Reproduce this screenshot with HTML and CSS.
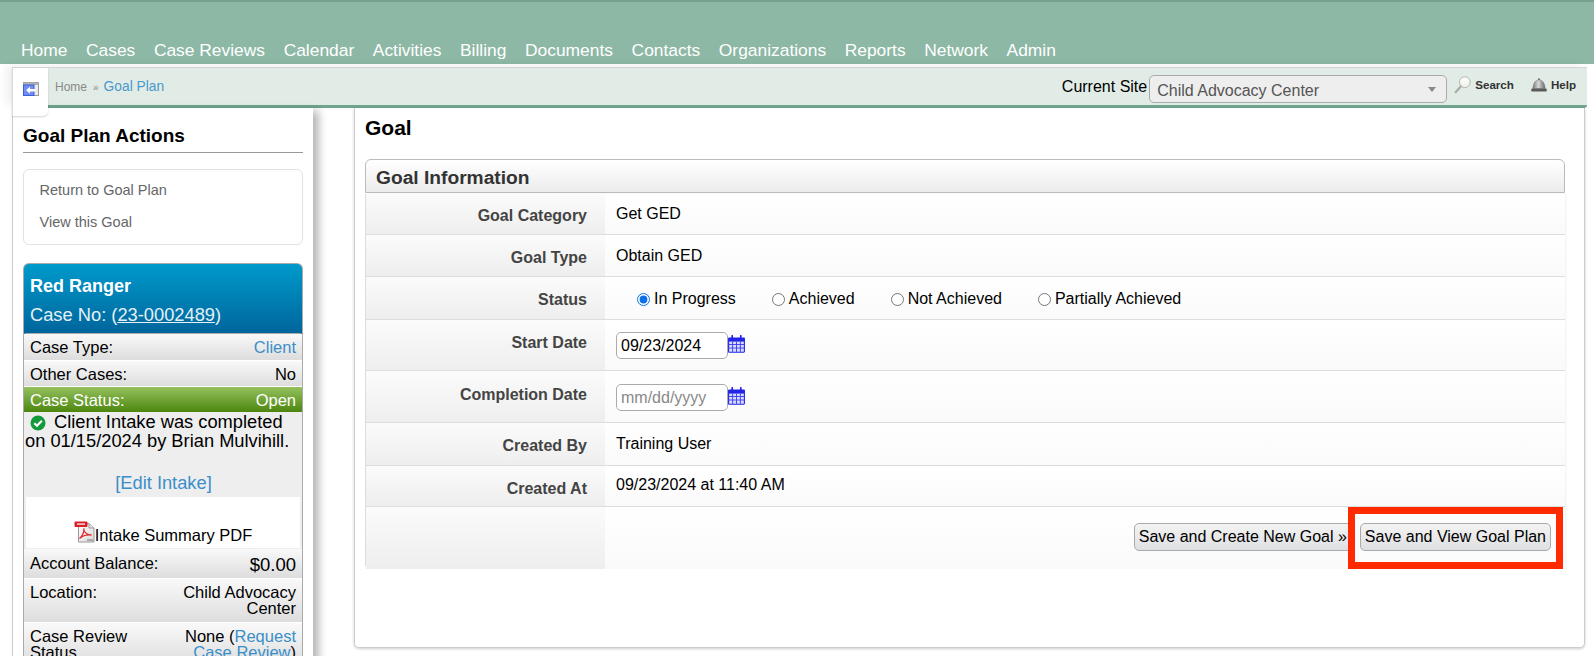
FILE: index.html
```html
<!DOCTYPE html>
<html lang="en">
<head>
<meta charset="utf-8">
<title>Goal</title>
<link rel="stylesheet" href="styles.css">
</head>
<body>
<nav class="topnav">
  <a>Home</a><a>Cases</a><a>Case Reviews</a><a>Calendar</a><a>Activities</a><a>Billing</a><a>Documents</a><a>Contacts</a><a>Organizations</a><a>Reports</a><a>Network</a><a>Admin</a>
</nav>
<div class="subbar">
  <div class="tab">
    <svg class="tab-icon" width="16" height="14" viewBox="0 0 16 14"><rect x="0.5" y="0.5" width="15" height="13" fill="#ececec" stroke="#9a9a9a"/><rect x="0.5" y="0.5" width="15" height="2.5" fill="#b0b0b0"/><rect x="0.5" y="3" width="10.5" height="10.5" fill="#6f8ef0" stroke="#3a5ce0"/><path d="M3 8.2 L7 4.8 V7 H12 V9.4 H7 V11.6 Z" fill="#fff"/></svg>
  </div>
  <div class="crumbs"><a class="crumb-home">Home</a><span class="crumb-sep">»</span><a class="crumb-link">Goal Plan</a></div>
  <div class="tools">
    <span class="site-label">Current Site</span>
    <div class="select-wrap"><select class="site-select"><option>Child Advocacy Center</option></select></div>
    <a class="tool tool-search">
      <svg width="17" height="18" viewBox="0 0 17 18"><defs><linearGradient id="lens" x1="0" y1="0" x2="0" y2="1"><stop offset="0" stop-color="#ffffff"/><stop offset="1" stop-color="#eef0e8"/></linearGradient></defs><circle cx="10.8" cy="6.2" r="5.4" fill="url(#lens)" stroke="#b3b7ae"/><path d="M6.8 10.4 L1.6 16.2" stroke="#a9ada4" stroke-width="2.2" stroke-linecap="round"/></svg>
      Search
    </a>
    <a class="tool tool-help">
      <svg width="16" height="14" viewBox="0 0 16 14"><defs><linearGradient id="dome" x1="0" y1="0" x2="1" y2="0"><stop offset="0" stop-color="#777"/><stop offset="0.45" stop-color="#d8d8d8"/><stop offset="1" stop-color="#666"/></linearGradient></defs><circle cx="8" cy="1.2" r="1" fill="#666"/><path d="M1.8 10.5 C2.5 5 4 2 8 2 C12 2 13.5 5 14.2 10.5 Z" fill="url(#dome)" stroke="#777" stroke-width="0.5"/><rect x="0.2" y="10.5" width="15.6" height="3" rx="1.2" fill="#5a5a5a"/></svg>
      Help
    </a>
  </div>
</div>
<div class="columns">
  <aside class="sidebar">
    <h2 class="side-title">Goal Plan Actions</h2>
    <div class="side-links">
      <a>Return to Goal Plan</a>
      <a>View this Goal</a>
    </div>
    <section class="case-card">
      <header class="case-head">
        <div class="case-name">Red Ranger</div>
        <div class="case-no">Case No: (<a>23-0002489</a>)</div>
      </header>
      <div class="case-body">
        <div class="case-row"><span>Case Type:</span><a class="link">Client</a></div>
        <div class="case-row"><span>Other Cases:</span><span>No</span></div>
        <div class="case-row case-row-green"><span>Case Status:</span><span>Open</span></div>
        <div class="intake">
          <p class="intake-text"><svg class="check" width="16" height="16" viewBox="0 0 16 16"><circle cx="8" cy="8" r="7.5" fill="#149a3c"/><path d="M4.3 8.2 L7 10.8 L11.8 5.8" fill="none" stroke="#fff" stroke-width="2.2"/></svg>Client Intake was completed on 01/15/2024 by Brian Mulvihill.</p>
          <a class="link edit-intake">[Edit Intake]</a>
        </div>
        <div class="pdf-box">
          <svg class="pdf-icon" width="21" height="22" viewBox="0 0 21 22"><defs><linearGradient id="page" x1="0" y1="0" x2="1" y2="1"><stop offset="0" stop-color="#ffffff"/><stop offset="1" stop-color="#d8d8d8"/></linearGradient></defs><path d="M4.5 2.5 H15 L20 7 V21 H4.5 Z" fill="url(#page)" stroke="#9a9a9a"/><path d="M15 2.5 V7 H20" fill="#e4e4e4" stroke="#9a9a9a"/><rect x="0.5" y="0.5" width="13" height="5.5" rx="1" fill="#d6202a"/><rect x="3" y="2.3" width="8" height="1.6" fill="#f6c9cb"/><path d="M5.5 17.5 C8.5 15 10.5 10.5 9.8 7.5 C9.5 10.5 12.5 14 17.5 14 C13 13.5 8.5 14.8 5.5 17.5 Z" fill="none" stroke="#e0282e" stroke-width="1.3"/><rect x="13" y="18" width="6" height="2" fill="#aaa"/></svg>Intake Summary PDF
        </div>
        <div class="case-row case-row-balance"><span>Account Balance:</span><span class="amount">$0.00</span></div>
        <div class="case-row case-row-tall"><span>Location:</span><span class="right-val">Child Advocacy Center</span></div>
        <div class="case-row case-row-tall"><span class="left-val">Case Review Status</span><span class="right-val">None (<a class="link">Request Case Review</a>)</span></div>
      </div>
    </section>
  </aside>
  <main class="main">
    <h1 class="page-title">Goal</h1>
    <section class="panel">
      <h2 class="panel-head">Goal Information</h2>
      <div class="fields">
        <div class="field"><div class="label label-high">Goal Category</div><div class="value value-mid">Get GED</div></div>
        <div class="field"><div class="label">Goal Type</div><div class="value">Obtain GED</div></div>
        <div class="field"><div class="label">Status</div>
          <div class="value radios">
            <label class="radio"><input type="radio" name="status" checked>In Progress</label>
            <label class="radio"><input type="radio" name="status">Achieved</label>
            <label class="radio"><input type="radio" name="status">Not Achieved</label>
            <label class="radio"><input type="radio" name="status">Partially Achieved</label>
          </div>
        </div>
        <div class="field"><div class="label">Start Date</div>
          <div class="value date-cell"><input class="date" type="text" value="09/23/2024">
            <svg class="cal" width="17" height="18" viewBox="0 0 17 18"><use href="#cal"/></svg></div>
        </div>
        <div class="field"><div class="label label-low">Completion Date</div>
          <div class="value date-cell date-cell-low"><input class="date" type="text" placeholder="mm/dd/yyyy">
            <svg class="cal" width="17" height="18" viewBox="0 0 17 18"><use href="#cal"/></svg></div>
        </div>
        <div class="field"><div class="label">Created By</div><div class="value">Training User</div></div>
        <div class="field"><div class="label">Created At</div><div class="value value-top">09/23/2024 at 11:40 AM</div></div>
        <div class="field"><div class="label"></div>
          <div class="value actions">
            <button class="btn btn-first">Save and Create New Goal »</button>
            <div class="highlight"><button class="btn">Save and View Goal Plan</button></div>
          </div>
        </div>
      </div>
    </section>
  </main>
</div>
<svg class="defs" width="0" height="0"><defs><g id="cal"><rect x="0.6" y="3" width="15.8" height="14.2" rx="0.6" fill="#d6dbff" stroke="#2424e8" stroke-width="1.1"/><rect x="0.6" y="3" width="15.8" height="3.6" fill="#2424e8"/><path d="M4.2 0.8 V4.6 M12.8 0.8 V4.6" stroke="#2424e8" stroke-width="1.7" stroke-linecap="round"/><path d="M0.6 9.5 H16.4 M0.6 13 H16.4 M4.6 6.6 V17 M8.5 6.6 V17 M12.4 6.6 V17" stroke="#3a3af0" stroke-width="0.9"/></g></defs></svg>
</body>
</html>
```
FILE: styles.css
```css
* { box-sizing: border-box; }
html, body { height: 656px; overflow: hidden; }
body { margin: 0; background: #fff; color: #000; font-family: "Liberation Sans", Arial, sans-serif; font-size: 16px; }
.defs { display: block; }

.topnav { height: 64px; background: #8db8a5; border-top: 2px solid #74a08c; display: flex; align-items: flex-end; gap: 18.6px; padding: 0 0 4px 21px; }
.topnav a { color: #fff; font-size: 17.4px; line-height: 20px; }

.subbar { height: 41px; margin: 3px 7px 0 12px; background: #e2ece6; border-top: 1px solid #d4d4d4; border-bottom: 3px solid #6ea58c; border-radius: 0 0 3px 3px; display: flex; align-items: flex-start; box-shadow: -6px -2px 8px rgba(0,0,0,.06); }
.tab { position: relative; z-index: 2; width: 36px; height: 48px; flex: none; background: #fff; border-left: 1px solid #ddd; border-radius: 0 0 5px 0; box-shadow: 0 1px 2px rgba(0,0,0,.18); padding: 14px 0 0 10px; }
.tab-icon { display: block; }
.crumbs { display: flex; align-items: baseline; margin-left: 7px; padding-top: 11px; }
.crumb-home { color: #888; font-size: 12px; }
.crumb-sep { color: #888; font-size: 10px; margin: 0 5px 0 6px; }
.crumb-link { color: #4a98cc; font-size: 13.8px; }
.tools { margin-left: auto; display: flex; align-items: center; height: 37px; padding-right: 11px; }
.site-label { font-size: 16px; margin-right: 2px; }
.select-wrap { position: relative; width: 298px; height: 28px; align-self: flex-start; margin-top: 7px; }
.select-wrap::after { content: ""; position: absolute; right: 11px; top: 12px; border: 4px solid transparent; border-top: 5px solid #888; border-bottom: 0; }
.site-select { appearance: none; width: 100%; height: 100%; background: #eee; border: 1px solid #aaa; border-radius: 5px; padding: 2px 7px 0; font: 16px "Liberation Sans", Arial, sans-serif; color: #555; }
.tool { display: flex; align-items: center; gap: 4px; font-size: 11.6px; font-weight: 700; color: #333; margin-top: -4px; }
.tool-search { margin-left: 7px; gap: 4px; }
.tool-help { margin-left: 17px; }

.columns { display: flex; align-items: flex-start; margin-left: 12px; }
.sidebar { width: 301px; height: 600px; flex: none; border-left: 1px solid #ccc; background: #fff; box-shadow: 6px 3px 8px rgba(0,0,0,.28); padding: 17px 10px 0 10px; }
.side-title { margin: 0; font-size: 19px; line-height: 22px; padding-bottom: 5px; border-bottom: 1px solid #999; height: 28px; font-weight: 700; }
.side-links { margin-top: 16px; height: 76px; border: 1px solid #e2e2e2; border-radius: 6px; padding: 4px 15.5px; display: flex; flex-direction: column; }
.side-links a { color: #666; font-size: 14.5px; line-height: 32px; }

.case-card { margin-top: 18px; width: 280px; }
.case-head { height: 72px; background: linear-gradient(#009acb, #00649b); border: 1px solid #aaa; border-bottom: 0; border-radius: 6px 6px 0 0; color: #fff; padding: 11px 6px 0 6px; }
.case-name { font-weight: 700; font-size: 18px; line-height: 22px; }
.case-no { font-size: 18.3px; line-height: 22px; margin-top: 7px; color: #e4f1f7; }
.case-no a { text-decoration: underline; }
.case-body { margin-top: -2px; position: relative; background: #eee; border: 1px solid #aaa; border-bottom: 0; border-radius: 4px 4px 0 0; font-size: 16.5px; }
.case-row { display: flex; justify-content: space-between; min-height: 26px; padding: 4px 6px 0 6px; line-height: 19px; background: linear-gradient(#f9f9f9, #dddddd); }
.case-row + .case-row { border-top: 1px solid #fff; }
.case-row-green { background: linear-gradient(#95c15f, #4c860e); color: #fff; }
.case-row-balance { min-height: 29px; padding-top: 5px; }
.case-row-tall { min-height: 44px; padding-top: 5px; line-height: 16.3px; }
.left-val { width: 110px; }
.right-val { text-align: right; width: 132px; }
.amount { font-size: 18.5px; line-height: 22px; }
.link { color: #3a8fc9; }
.intake { height: 85px; background: #eee; padding: 0 0 0 1px; }
.intake-text { margin: 0; font-size: 18.3px; line-height: 19px; }
.check { margin: 0 8px 0 5px; vertical-align: -3px; }
.edit-intake { display: block; text-align: center; font-size: 18.3px; line-height: 20px; margin-top: 23px; }
.pdf-box { margin: 0 2px; height: 52px; background: #fff; text-align: center; padding-top: 28px; line-height: 20px; border-bottom: 1px solid #eee; }
.pdf-icon { vertical-align: -2px; margin-top: -4px; }

.main { width: 1231px; height: 540px; margin-left: 41px; flex: none; background: #fff; border: 1px solid #ccc; border-top: 0; border-radius: 0 0 5px 5px; box-shadow: 0 1px 3px rgba(0,0,0,.2); padding: 0 19px 0 10px; }
.page-title { margin: 0; font-size: 21px; line-height: 24px; padding-top: 8px; height: 51px; font-weight: 700; }
.panel-head { margin: 0; height: 34px; font-size: 19.2px; line-height: 35px; font-weight: 700; color: #333; padding-left: 10px; border: 1px solid #bbb; border-radius: 6px 6px 0 0; background: linear-gradient(#fff, #ececec); }
.fields { display: grid; grid-template-rows: 41px 42px 43px 51px 52px 43px 41px 59px; margin-top: 1px; box-shadow: 1px 0 2px rgba(0,0,0,.06); }
.field { display: grid; grid-template-columns: 239px 1fr; border-bottom: 1px solid #ddd; border-left: 1px solid #ddd; }
.label { text-align: right; font-weight: 700; color: #444; padding: 13px 18px 0 0; background: linear-gradient(#fbfbfb, #eeeeee); line-height: 20px; }
.label-high { padding-top: 12px; }
.label-low { padding-top: 14px; }
.value { padding: 11px 0 0 11px; line-height: 20px; background: linear-gradient(#fff, #fafafa); }
.value-mid { padding-top: 10px; }
.value-top { padding-top: 9px; }
.radios { display: flex; gap: 36px; padding: 12px 0 0 32px; }
.radio { display: flex; align-items: center; height: 20px; }
.radio input { margin: 0 4px 0 0; width: 13px; height: 13px; accent-color: #0f6fe8; }
.date-cell { display: flex; align-items: flex-start; padding-top: 12px; }
.date-cell-low { padding-top: 13px; }
.date { width: 112px; height: 27px; border: 1px solid #aaa; border-radius: 5px; padding: 0 4px; font: 16px "Liberation Sans", Arial, sans-serif; color: #000; background: #fff; }
.date::placeholder { color: #888; }
.cal { margin-top: 3px; flex: none; }
.actions { display: flex; justify-content: flex-end; align-items: flex-start; padding: 0 2px 0 0; }
.btn { height: 28px; padding: 0 4px; border: 1px solid #aaa; border-radius: 5px; background: linear-gradient(#f3f3f3, #dfe0e2); font: 16px "Liberation Sans", Arial, sans-serif; color: #000; white-space: nowrap; }
.btn-first { margin: 16px -4px 0 0; }
.highlight { position: relative; height: 62px; border: 7px solid #ff2a00; padding: 9px 5px 0 5px; background: #fcfcfc; }
```
